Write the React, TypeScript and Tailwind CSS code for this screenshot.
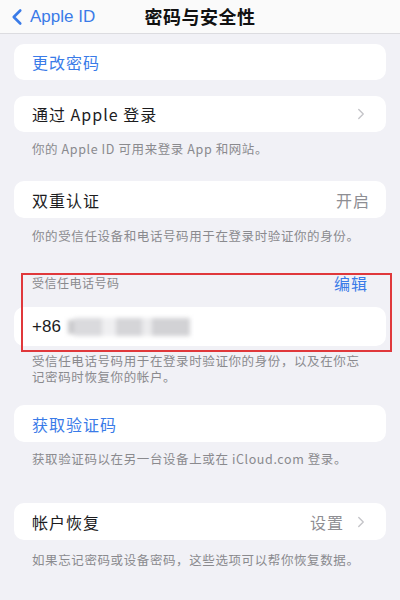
import { ChevronLeft, ChevronRight } from "lucide-react";

const FONT = { fontFamily: '"Noto Sans CJK SC", "Liberation Sans", sans-serif' };

function Row({
  label,
  blue,
  value,
  chevron,
  h = "h-[37px]",
  mt,
}: {
  label: string;
  blue?: boolean;
  value?: string;
  chevron?: boolean;
  h?: string;
  mt: string;
}) {
  return (
    <div className={`flex items-center rounded-[10px] bg-white pl-[18px] pr-[16px] ${h} ${mt}`}>
      <span className={`text-[16px] leading-[22px] tracking-[1px] ${blue ? "text-[#3a7be8]" : "text-[#1c1c1e]"}`}>
        {label}
      </span>
      <div className="ml-auto flex items-center gap-[8px]">
        {value && <span className="text-[16px] leading-[22px] tracking-[1px] text-[#8e8e93]">{value}</span>}
        {chevron && <ChevronRight size={18} strokeWidth={1.8} className="text-[#c4c4c8]" />}
      </div>
    </div>
  );
}

function Note({ children, pt }: { children: React.ReactNode; pt: string }) {
  return (
    <p className={`pl-[18px] pr-[18px] text-[12.5px] leading-[16px] tracking-[0.6px] text-[#8a8a8e] ${pt}`}>
      {children}
    </p>
  );
}

export default function App() {
  return (
    <div className="relative h-[600px] w-[400px] overflow-hidden bg-[#f1f1f6]" style={FONT}>
      <header className="relative flex h-[34px] items-center border-b border-[#dcdce0] bg-[#fafafa]">
        <div className="flex items-center pl-[4px] text-[#3a7be8]">
          <ChevronLeft size={26} strokeWidth={2.4} />
          <span className="text-[17px] leading-none" style={{ fontFamily: '"Liberation Sans", sans-serif' }}>
            Apple ID
          </span>
        </div>
        <h1 className="absolute left-1/2 -translate-x-1/2 text-[18px] font-bold tracking-[0.5px] text-[#111]">
          密码与安全性
        </h1>
      </header>

      <div className="px-[14px]">
        <Row label="更改密码" blue h="h-[36px]" mt="mt-[10px]" />

        <Row label="通过 Apple 登录" chevron h="h-[36px]" mt="mt-[16px]" />
        <Note pt="pt-[9px]">你的 Apple ID 可用来登录 App 和网站。</Note>

        <Row label="双重认证" value="开启" mt="mt-[24px]" />
        <Note pt="pt-[10px]">你的受信任设备和电话号码用于在登录时验证你的身份。</Note>

        <div className="mt-[28px] flex items-center pl-[18px] pr-[18px]">
          <span className="text-[12px] leading-[20px] tracking-[0.5px] text-[#8a8a8e]">受信任电话号码</span>
          <span className="ml-auto text-[16px] leading-[22px] tracking-[1px] text-[#3a7be8]">编辑</span>
        </div>
        <div className="mt-[13px] flex h-[39px] items-center rounded-[10px] bg-white pl-[18px]">
          <span className="text-[17px] text-[#1c1c1e]" style={{ fontFamily: '"Liberation Sans", sans-serif' }}>
            +86
          </span>
          <div className="ml-[7px] flex h-[18px] items-center blur-[2px]">
            <div className="h-[14px] w-[6px] bg-[#c9c9cc]" />
            <div className="h-[18px] w-[28px] bg-[#dadadd]" />
            <div className="h-[18px] w-[14px] bg-[#efeff1]" />
            <div className="h-[18px] w-[26px] bg-[#d5d5d8]" />
            <div className="h-[18px] w-[10px] bg-[#ebebed]" />
            <div className="h-[18px] w-[38px] bg-[#d2d2d5]" />
          </div>
        </div>
        <Note pt="pt-[7px] leading-[15px]">
          受信任电话号码用于在登录时验证你的身份，以及在你忘记密码时恢复你的帐户。
        </Note>

        <Row label="获取验证码" blue mt="mt-[20px]" />
        <Note pt="pt-[9px]">获取验证码以在另一台设备上或在 iCloud.com 登录。</Note>

        <Row label="帐户恢复" value="设置" chevron mt="mt-[36px]" />
        <Note pt="pt-[12px]">如果忘记密码或设备密码，这些选项可以帮你恢复数据。</Note>
      </div>

      {/* annotation box */}
      <div className="pointer-events-none absolute left-[21px] top-[273px] h-[79px] w-[371px] border-2 border-[#e0383b]" />
    </div>
  );
}
